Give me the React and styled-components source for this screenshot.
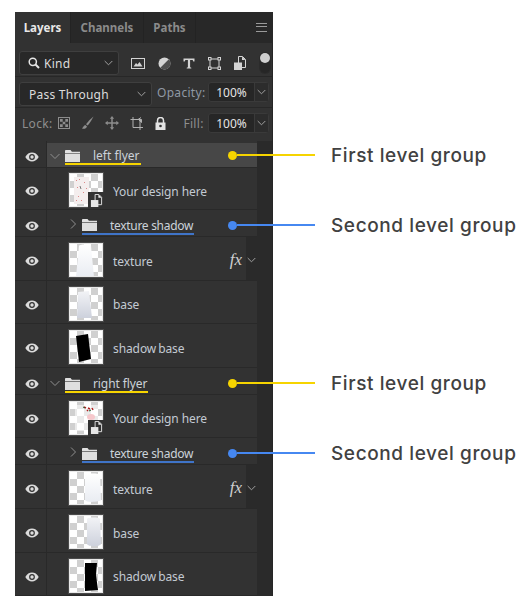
import React from 'react';
import styled, { createGlobalStyle } from 'styled-components';

const YELLOW = '#f6d400';
const BLUE = '#4688f1';

const GlobalStyle = createGlobalStyle`
  html, body { margin: 0; padding: 0; background: #fff; }
  body { font-family: "Noto Sans", "Open Sans", sans-serif; }
`;

const Page = styled.div`
  width: 532px;
  height: 607px;
  padding: 12px 0 0 15px;
  box-sizing: border-box;
  overflow: hidden;
`;

const Panel = styled.div`
  width: 258px;
  background: #323232;
  box-shadow: inset -1px 0 0 #262626;
`;

const TabBar = styled.div`
  height: 31px;
  display: flex;
  background: #282828;
`;

const Tab = styled.div`
  width: ${(p) => p.$w}px;
  display: flex;
  align-items: center;
  justify-content: center;
  font-size: 11.5px;
  font-weight: 700;
  background: ${(p) => (p.$active ? '#323232' : 'transparent')};
  color: ${(p) => (p.$active ? '#e8e8e8' : '#8b8b8b')};
  border-right: 1px solid #232323;
  box-sizing: border-box;
`;

const MenuButton = styled.div`
  margin-left: auto;
  margin-right: 6px;
  align-self: center;
  width: 11px;
  height: 7px;
  border-top: 1px solid #9a9a9a;
  border-bottom: 1px solid #9a9a9a;
  position: relative;
  &::after {
    content: '';
    position: absolute;
    left: 0;
    right: 0;
    top: 2px;
    height: 1px;
    background: #9a9a9a;
  }
`;

const ToolRow = styled.div`
  height: ${(p) => p.$h}px;
  display: flex;
  align-items: ${(p) => p.$align || 'center'};
  padding: ${(p) => p.$pad || '0 4px'};
  box-sizing: border-box;
  border-bottom: ${(p) => (p.$last ? 'none' : '1px solid #272727')};
  color: #a5a5a5;
`;

const Select = styled.div`
  width: ${(p) => p.$w}px;
  height: 24px;
  flex: none;
  display: flex;
  align-items: center;
  gap: 4px;
  padding: 0 5px 0 ${(p) => p.$left}px;
  box-sizing: border-box;
  background: #282828;
  border: 1px solid #3f3f3f;
  border-radius: 3px;
  font-size: 12px;
  letter-spacing: 0.25px;
  color: #dcdcdc;
  & > svg:last-child { margin-left: auto; }
`;

const FilterIcons = styled.div`
  flex: 1;
  display: flex;
  align-items: center;
  gap: 12.5px;
  padding-left: 12px;
  color: #d4d4d4;
  svg { flex: none; }
`;

const Toggle = styled.div`
  width: 10px;
  height: 20px;
  flex: none;
  border-radius: 5px;
  background: #262626;
  box-shadow: 0 0 0 1px #2b2b2b;
  position: relative;
  &::after {
    content: '';
    position: absolute;
    top: 0;
    left: 0;
    width: 10px;
    height: 10px;
    border-radius: 50%;
    background: #cfcfcf;
  }
`;

const FieldLabel = styled.span`
  font-size: 12px;
  line-height: 21px;
  letter-spacing: 0.3px;
  color: ${(p) => p.$color || '#8f99a5'};
  margin-left: ${(p) => p.$ml}px;
  white-space: nowrap;
`;

const NumberField = styled.div`
  width: 61px;
  height: 20px;
  flex: none;
  margin-left: auto;
  display: flex;
  border: 1px solid #3a3a3a;
  border-radius: 3px;
  background: #262626;
  box-sizing: border-box;
  font-size: 12px;
  color: #e4e4e4;
`;

const NumberValue = styled.div`
  width: 45px;
  display: flex;
  align-items: center;
  justify-content: center;
  border-right: 1px solid #3a3a3a;
`;

const NumberArrow = styled.div`
  flex: 1;
  display: flex;
  align-items: center;
  justify-content: center;
  background: #2c2c2c;
`;

const LockIcons = styled.div`
  display: flex;
  align-items: center;
  gap: 11px;
  margin-left: 6px;
  color: #8d8d8d;
  svg { flex: none; }
`;

const Row = styled.div`
  height: ${(p) => p.$h}px;
  display: grid;
  grid-template-columns: 32px 210px 16px;
  position: relative;
  box-sizing: border-box;
`;

const EyeCell = styled.div`
  display: flex;
  align-items: center;
  justify-content: center;
  padding: 5px 0 0 2px;
  border-right: 1px solid #292929;
  border-bottom: 1px solid #292929;
`;

const Body = styled.div`
  display: flex;
  align-items: center;
  position: relative;
  border-bottom: 1px solid #292929;
  padding-left: ${(p) => p.$left || 0}px;
`;

const Scroll = styled.div`
  background: #2a2a2a;
  box-shadow: inset -1px 0 0 #262626;
`;

const Highlight = styled.div`
  flex: 1;
  height: 24px;
  margin-top: 1px;
  display: flex;
  align-items: center;
  padding-left: 3px;
  background: ${(p) => (p.$on ? '#474747' : 'transparent')};
`;

const Chevron = styled.svg`
  flex: none;
  width: 10px;
  height: 10px;
  margin-top: 2px;
  color: #8e8e8e;
  margin-right: ${(p) => p.$mr}px;
`;

const Title = styled.div`
  display: flex;
  align-items: center;
  height: 15px;
  padding: 1px 1px 0 0;
  margin-top: ${(p) => p.$mt}px;
  border-bottom: 2px solid ${(p) => p.$color};
  font-size: 12px;
  letter-spacing: ${(p) => p.$ls}px;
  color: #ccd2d9;
  white-space: nowrap;
  svg { margin-right: 13px; }
`;

const Thumb = styled.div`
  width: 34px;
  height: 34px;
  flex: none;
  margin: 3px 0 0 22px;
  position: relative;
  box-sizing: border-box;
  border: 1px solid #e8e8e8;
  outline: 1px solid #4a4a4a;
  background-color: #fff;
  background-image: conic-gradient(#d0d0d0 25%, #fff 0 50%, #d0d0d0 0 75%, #fff 0);
  background-size: 14px 14px;
  svg { display: block; }
`;

const Badge = styled.div`
  position: absolute;
  right: -2px;
  bottom: -2px;
  width: 16px;
  height: 16px;
  background: #323232;
  display: flex;
  align-items: center;
  justify-content: center;
`;

const LayerName = styled.div`
  margin-left: 10px;
  padding-top: 5px;
  font-size: 12px;
  letter-spacing: -0.1px;
  word-spacing: ${(p) => p.$ws || 0}px;
  color: #c3cad2;
  white-space: nowrap;
`;

const FxBox = styled.div`
  margin-left: auto;
  align-self: stretch;
  display: flex;
  align-items: center;
`;

const FxText = styled.span`
  font-family: "Liberation Serif", serif;
  font-style: italic;
  font-size: 17px;
  padding-top: 2px;
  color: #d0d0d0;
  margin-right: 4px;
`;

const FxArrow = styled.div`
  width: 11px;
  align-self: stretch;
  display: flex;
  align-items: center;
  justify-content: center;
  padding-top: 2px;
  background: #2a2a2a;
`;

const Callout = styled.div`
  position: absolute;
  left: 213px;
  top: ${(p) => p.$top}px;
  height: 10px;
  display: flex;
  align-items: center;
`;

const Dot = styled.span`
  width: 9px;
  height: 9px;
  border-radius: 50%;
  flex: none;
  background: ${(p) => p.$color};
`;

const Wire = styled.span`
  width: 78px;
  height: 2px;
  flex: none;
  background: ${(p) => p.$color};
`;

const CalloutLabel = styled.span`
  margin-left: 16px;
  font-family: Inter, "Open Sans", sans-serif;
  font-size: 19px;
  font-weight: 500;
  letter-spacing: 0.6px;
  color: #414141;
  white-space: nowrap;
`;

const Eye = () => (
  <svg width="14" height="10" viewBox="0 0 14 10">
    <path d="M0.3 5C2 2 4.3.6 7 .6S12 2 13.7 5C12 8 9.7 9.4 7 9.4S2 8 .3 5Z" fill="#dcdcdc" />
    <circle cx="7" cy="5" r="2.9" fill="#323232" />
    <circle cx="7" cy="5" r="1.7" fill="#dcdcdc" />
  </svg>
);

const Folder = () => (
  <svg width="15" height="12" viewBox="0 0 15 12">
    <path d="M0 1.2C0 .5.4 0 1 0h4.500l1.400 1.800H15V3H0Z" fill="#e0e0e0" />
    <rect y="3.600" width="15" height="8.400" fill="#dedede" />
  </svg>
);

const Open = () => (
  <Chevron $mr={5} viewBox="0 0 10 10">
    <path d="M.5 3 5 7.500 9.500 3" fill="none" stroke="currentColor" strokeWidth="1" />
  </Chevron>
);

const Closed = () => (
  <Chevron $mr={4} viewBox="0 0 10 10">
    <path d="M3 .5 7.500 5 3 9.500" fill="none" stroke="currentColor" strokeWidth="1" />
  </Chevron>
);

const SmallDown = ({ color = '#a0a0a0' }) => (
  <svg width="9" height="6" viewBox="0 0 9 6">
    <path d="M.7 1 4.500 4.800 8.300 1" fill="none" stroke={color} strokeWidth="1" />
  </svg>
);

const Search = () => (
  <svg width="12" height="12" viewBox="0 0 12 12">
    <circle cx="4.800" cy="4.800" r="3.600" fill="none" stroke="#e6e6e6" strokeWidth="1.500" />
    <path d="M7.500 7.500 11 11" stroke="#e6e6e6" strokeWidth="2" />
  </svg>
);

const ImageFilter = () => (
  <svg width="14" height="11" viewBox="0 0 14 11">
    <rect x=".5" y=".5" width="13" height="10" fill="none" stroke="currentColor" />
    <path d="M2.500 8.500 5 5l1.500 1.600L8.500 4l3 4.500Z" fill="currentColor" />
  </svg>
);

const AdjustFilter = () => (
  <svg width="13" height="13" viewBox="0 0 13 13">
    <circle cx="6.500" cy="6.500" r="6" fill="currentColor" />
    <path d="M10.800 2.300A6 6 0 0 1 2.300 10.800Z" fill="#4f4f4f" />
  </svg>
);

const TypeFilter = () => (
  <svg width="12" height="11" viewBox="0 0 12 11">
    <path d="M.5.5h11v3H10.300L9.600 1.900H7.100v7.300l1.200.6V10.600H3.700V9.800l1.200-.6V1.900H2.400L1.700 3.500H.5Z" fill="currentColor" />
  </svg>
);

const ShapeFilter = () => (
  <svg width="13" height="13" viewBox="0 0 13 13" fill="none" stroke="currentColor">
    <rect x="2" y="2" width="9" height="9" />
    <rect x=".5" y=".5" width="2.500" height="2.500" fill="#323232" />
    <rect x="10" y=".5" width="2.500" height="2.500" fill="#323232" />
    <rect x=".5" y="10" width="2.500" height="2.500" fill="#323232" />
    <rect x="10" y="10" width="2.500" height="2.500" fill="#323232" />
  </svg>
);

const SmartDoc = ({ size = 14, fill = 'currentColor' }) => (
  <svg width={size} height={size} viewBox="0 0 14 14">
    <path d="M5.500.5h4l3 3v8h-7Z" fill="none" stroke={fill} />
    <path d="M9 .5V4h3.500Z" fill={fill} />
    <rect x="1" y="6.500" width="8" height="7.500" fill={fill} />
  </svg>
);

const LockPixels = () => (
  <svg width="12" height="12" viewBox="0 0 12 12">
    <rect x=".5" y=".5" width="11" height="11" fill="none" stroke="currentColor" />
    <path d="M2 2h2.700v2.700H2ZM7.300 2H10v2.700H7.300ZM4.700 4.700h2.600v2.600H4.700ZM2 7.300h2.700V10H2ZM7.300 7.300H10V10H7.300Z" fill="currentColor" />
  </svg>
);

const LockBrush = () => (
  <svg width="13" height="14" viewBox="0 0 13 14">
    <path d="M12.500.5C10 2.500 7 5.500 5 8.300l1.700 1.300C8.800 7 11 3.500 12.500.5Z" fill="currentColor" />
    <path d="M4.300 9C2.800 9.200 2.600 11 1 12.500c2 .8 4.300.2 5-2Z" fill="currentColor" />
  </svg>
);

const LockMove = () => (
  <svg width="14" height="14" viewBox="0 0 13 13">
    <path d="M6.500 0 8.500 2.500H7.200V5.800h3.300V4.500L13 6.500l-2.500 2V7.200H7.200v3.300h1.300l-2 2.500-2-2.500h1.300V7.200H2.500v1.300L0 6.500l2.500-2v1.300h3.300V2.500H4.500Z" fill="currentColor" />
  </svg>
);

const LockCrop = () => (
  <svg width="14" height="13" viewBox="0 0 14 13" fill="none" stroke="#b0b0b0">
    <path d="M3 0v10.500h10" />
    <path d="M.5 2.500h9.500V13" />
    <path d="M8 2.500 11 .5" />
    <path d="M8.500 2.500h3v3Z" fill="#b0b0b0" />
  </svg>
);

const LockClosed = () => (
  <svg width="11" height="13" viewBox="0 0 11 13">
    <path d="M2.500 6V3.500a3 3 0 0 1 6 0V6" fill="none" stroke="#e4e4e4" strokeWidth="1.500" />
    <path d="M.5 5.500h10V13H.5Z" fill="#e4e4e4" />
    <circle cx="5.500" cy="9" r="1.300" fill="#323232" />
  </svg>
);

// thumbnail contents, one per layer bitmap
const arts = {
  designA: (
    <>
      <rect x="4" y="3" width="15" height="27" fill="#f4eeee" />
      <path d="M6 6l1 1M9 5l1 1M14 8l1 1M7 13l1 1M13 18l1 1M8 22l1 1M11 26l1 1M16 14l1 1M6 26l1 1" stroke="#d88" strokeWidth="1" />
      <path d="M10 12l1 3" stroke="#777" strokeWidth="1" />
    </>
  ),
  designB: (
    <>
      <rect x="5" y="3" width="23" height="26" fill="#fff" opacity=".55" />
      <path d="M14 5l2 1M18 6l2 1M22 6l1 2M17 8l1 1" stroke="#b02020" strokeWidth="1.500" />
      <path d="M13 5l2 1M19 9l2-1" stroke="#2c5a2c" strokeWidth="1" />
      <ellipse cx="21" cy="15" rx="4" ry="3" fill="#f6c8cc" />
    </>
  ),
  textureA: <path d="M9 2C9 0 20 0 21 2L24 33H6Z" fill="url(#pale)" />,
  baseA: <path d="M8 4 19 3 22 30H7Z" fill="url(#cool)" />,
  shadowA: <path d="M6 5 18 3 21 28 9 31Z" fill="#000" />,
  textureB: <path d="M15 3C15 1 30 1 30 3L31 28C30 30 16 31 15 28Z" fill="url(#pale)" />,
  baseB: <path d="M17 3C17 1 30 1 30 3L31 28C30 31 18 31 17 28Z" fill="url(#cool)" />,
  shadowB: <path d="M15 3 27 3 26 15 28 30 15 31Z" fill="#000" />
};

const Art = ({ name }) => (
  <svg width="32" height="32" viewBox="0 0 32 32">
    <defs>
      <linearGradient id="pale" x1="0" y1="0" x2="0" y2="1">
        <stop offset="0" stopColor="#fff" />
        <stop offset="1" stopColor="#e9ecf2" />
      </linearGradient>
      <linearGradient id="cool" x1="0" y1="0" x2="0" y2="1">
        <stop offset="0" stopColor="#f2f3f6" />
        <stop offset="1" stopColor="#cdd1dc" />
      </linearGradient>
    </defs>
    {arts[name]}
  </svg>
);

const Mark = ({ color, top, children }) => (
  <Callout $top={top}>
    <Dot $color={color} />
    <Wire $color={color} />
    <CalloutLabel>{children}</CalloutLabel>
  </Callout>
);

const GroupRow = ({ name, on, mt, ls }) => (
  <Row $h={27}>
    <EyeCell><Eye /></EyeCell>
    <Body>
      <Highlight $on={on}>
        <Open />
        <Title $color={YELLOW} $mt={mt} $ls={ls}><Folder />{name}</Title>
      </Highlight>
    </Body>
    <Scroll />
    <Mark color={YELLOW} top={on ? 9 : 10}>First level group</Mark>
  </Row>
);

const SubGroupRow = ({ h, mt }) => (
  <Row $h={h}>
    <EyeCell><Eye /></EyeCell>
    <Body $left={21}>
      <Closed />
      <Title $color="#3f74c8" $mt={mt} $ls={-0.3}><Folder />texture shadow</Title>
    </Body>
    <Scroll />
    <Mark color={BLUE} top={10}>Second level group</Mark>
  </Row>
);

const LayerRow = ({ art, name, h = 44, smart, fx, ws }) => (
  <Row $h={h}>
    <EyeCell><Eye /></EyeCell>
    <Body>
      <Thumb>
        <Art name={art} />
        {smart && <Badge><SmartDoc size={13} fill="#e6e6e6" /></Badge>}
      </Thumb>
      <LayerName $ws={ws}>{name}</LayerName>
      {fx && (
        <FxBox>
          <FxText>fx</FxText>
          <FxArrow><SmallDown /></FxArrow>
        </FxBox>
      )}
    </Body>
    <Scroll />
  </Row>
);

export default function App() {
  return (
    <Page>
      <GlobalStyle />
      <Panel>
        <TabBar>
          <Tab $w={56} $active>Layers</Tab>
          <Tab $w={73}>Channels</Tab>
          <Tab $w={52}>Paths</Tab>
          <MenuButton />
        </TabBar>
        <ToolRow $h={34} $pad="7px 3px 0 4px">
          <Select $w={100} $left={8}>
            <Search />
            Kind
            <SmallDown />
          </Select>
          <FilterIcons>
            <ImageFilter />
            <AdjustFilter />
            <TypeFilter />
            <ShapeFilter />
            <SmartDoc />
          </FilterIcons>
          <Toggle />
        </ToolRow>
        <ToolRow $h={31} $align="flex-start" $pad="5px 4px 0">
          <Select $w={133} $left={9}>
            Pass Through
            <SmallDown />
          </Select>
          <FieldLabel $ml={5}>Opacity:</FieldLabel>
          <NumberField>
            <NumberValue>100%</NumberValue>
            <NumberArrow><SmallDown /></NumberArrow>
          </NumberField>
        </ToolRow>
        <ToolRow $h={33} $pad="0 4px 3px 7px" $last>
          <FieldLabel $ml={0} $color="#8e8e8e">Lock:</FieldLabel>
          <LockIcons>
            <LockPixels />
            <LockBrush />
            <LockMove />
            <LockCrop />
            <LockClosed />
          </LockIcons>
          <FieldLabel $ml={17} $color="#8e8e8e">Fill:</FieldLabel>
          <NumberField>
            <NumberValue>100%</NumberValue>
            <NumberArrow><SmallDown /></NumberArrow>
          </NumberField>
        </ToolRow>
        <div>
          <GroupRow name="left flyer" on mt={3} ls={0} />
          <LayerRow art="designA" name="Your design here" h={42} smart />
          <SubGroupRow h={27} mt={5} />
          <LayerRow art="textureA" name="texture" fx />
          <LayerRow art="baseA" name="base" h={43} />
          <LayerRow art="shadowA" name="shadow base" ws={-1} />
          <GroupRow name="right flyer" mt={5} ls={-0.1} />
          <LayerRow art="designB" name="Your design here" h={43} smart />
          <SubGroupRow h={27} mt={6} />
          <LayerRow art="textureB" name="texture" fx />
          <LayerRow art="baseB" name="base" />
          <LayerRow art="shadowB" name="shadow base" h={43} ws={-1} />
        </div>
      </Panel>
    </Page>
  );
}
